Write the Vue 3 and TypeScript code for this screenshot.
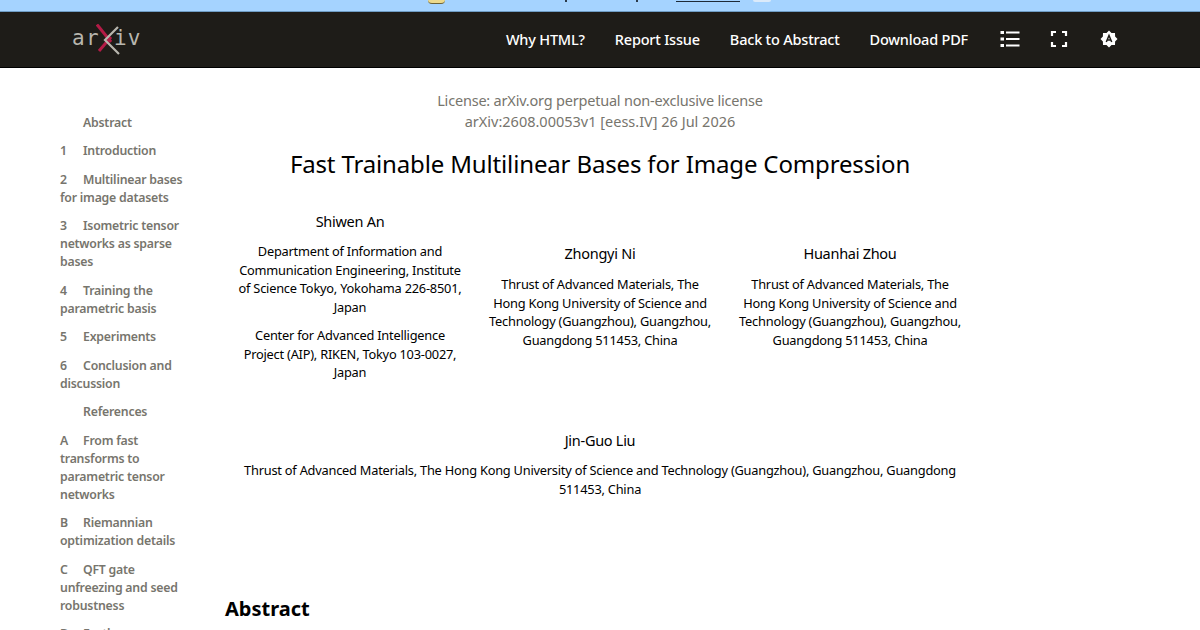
<script setup lang="ts">
type TocItem = { tag?: string; label: string }

const navLinks = ['Why HTML?', 'Report Issue', 'Back to Abstract', 'Download PDF']

const tocItems: TocItem[] = [
  { label: 'Abstract' },
  { tag: '1', label: 'Introduction' },
  { tag: '2', label: 'Multilinear bases for image datasets' },
  { tag: '3', label: 'Isometric tensor networks as sparse bases' },
  { tag: '4', label: 'Training the parametric basis' },
  { tag: '5', label: 'Experiments' },
  { tag: '6', label: 'Conclusion and discussion' },
  { label: 'References' },
  { tag: 'A', label: 'From fast transforms to parametric tensor networks' },
  { tag: 'B', label: 'Riemannian optimization details' },
  { tag: 'C', label: 'QFT gate unfreezing and seed robustness' },
  { tag: 'D', label: 'Further' }
]

const hkAffil = 'Thrust of Advanced Materials, The Hong Kong University of Science and Technology (Guangzhou), Guangzhou, Guangdong 511453, China'
</script>

<template>
  <div class="page">
    <div class="banner">
      <span class="banner-emoji"></span>
      <span class="banner-tick banner-tick--one"></span>
      <span class="banner-tick banner-tick--two"></span>
      <span class="banner-link"></span>
      <span class="banner-btn"></span>
    </div>
    <header class="navbar">
      <div class="logo">
        <span class="logo-text">ar</span>
        <svg class="logo-x" width="26" height="32" viewBox="0 0 26 32" fill="none">
          <path d="M1 0.5 L15 18" stroke="#b31b46" stroke-width="3" />
          <path d="M15 13 L3 27" stroke="#b31b46" stroke-width="3" />
          <path d="M22 3 L9 16 L23 30" stroke="#b8b6ae" stroke-width="2.2" />
        </svg>
        <span class="logo-text">iv</span>
      </div>
      <nav class="nav">
        <a v-for="link in navLinks" :key="link" class="nav-link">{{ link }}</a>
        <svg class="nav-icon list-icon" width="20" height="18" viewBox="0 0 20 18" fill="#fff">
          <rect x="0.5" y="1" width="3.5" height="3" />
          <rect x="0.5" y="7.5" width="3.5" height="3" />
          <rect x="0.5" y="14" width="3.5" height="3" />
          <rect x="6" y="1.5" width="13.5" height="2" />
          <rect x="6" y="8" width="13.5" height="2" />
          <rect x="6" y="14.5" width="13.5" height="2" />
        </svg>
        <svg class="nav-icon expand-icon" width="18" height="18" viewBox="0 0 18 18" fill="none" stroke="#fff" stroke-width="2.2">
          <path d="M2 6 V2 H6 M12 2 H16 V6 M16 12 V16 H12 M6 16 H2 V12" />
        </svg>
        <svg class="nav-icon theme-icon" width="18" height="18" viewBox="0 0 18 18">
          <path fill="#fff" d="M9 0.5 L11.5 2.9 L15 2.9 L15.1 6.4 L17.5 9 L15.1 11.6 L15 15.1 L11.5 15.1 L9 17.5 L6.5 15.1 L3 15.1 L2.9 11.6 L0.5 9 L2.9 6.4 L3 2.9 L6.5 2.9 Z" />
          <path fill="none" stroke="#1e1c18" stroke-width="1.5" d="M6.3 12 L9 5.4 L11.7 12 M7.2 10 H10.8" />
        </svg>
      </nav>
    </header>

    <div class="body">
      <aside class="toc">
        <div v-for="item in tocItems" :key="item.label" class="toc-item" :class="{ 'toc-item--plain': !item.tag }">
          <span v-if="item.tag" class="toc-tag">{{ item.tag }}</span>{{ item.label }}
        </div>
      </aside>

      <main class="article">
        <div class="license">
          <div class="license-line">License: arXiv.org perpetual non-exclusive license</div>
          <div>arXiv:2608.00053v1 [eess.IV] 26 Jul 2026</div>
        </div>
        <h1 class="title">Fast Trainable Multilinear Bases for Image Compression</h1>

        <div class="authors">
          <section class="author author--first">
            <div class="author-name">Shiwen An</div>
            <p>Department of Information and Communication Engineering, Institute of Science Tokyo, Yokohama 226-8501, Japan</p>
            <p>Center for Advanced Intelligence Project (AIP), RIKEN, Tokyo 103-0027, Japan</p>
          </section>
          <section class="author author--mid">
            <div class="author-name">Zhongyi Ni</div>
            <p>{{ hkAffil }}</p>
          </section>
          <section class="author author--mid">
            <div class="author-name">Huanhai Zhou</div>
            <p>{{ hkAffil }}</p>
          </section>
        </div>

        <section class="author author--wide">
          <div class="author-name">Jin-Guo Liu</div>
          <p>{{ hkAffil }}</p>
        </section>

        <h2 class="abstract-title">Abstract</h2>
      </main>
    </div>
  </div>
</template>

<style scoped>
.page {
  width: 1200px;
  height: 630px;
  overflow: hidden;
  background: #fff;
  font-family: "Noto Sans", "Liberation Sans", sans-serif;
  color: #000;
}

.banner {
  height: 11px;
  background: #a5d3ff;
  position: relative;
  border-bottom: 1px solid #6f9cc4;
}

.banner-emoji {
  position: absolute;
  left: 428px;
  top: 0;
  width: 17px;
  height: 3px;
  background: #ecd98c;
  border-radius: 0 0 8px 8px;
  border-bottom: 1px solid #6b6238;
}

.banner-tick {
  position: absolute;
  top: 0;
  width: 2px;
  height: 2px;
  background: #2b3a4a;
}

.banner-tick--one {
  left: 565px;
}

.banner-tick--two {
  left: 636px;
}

.banner-link {
  position: absolute;
  left: 676px;
  top: 0;
  width: 64px;
  height: 1px;
  border-bottom: 1px solid #1d2a38;
}

.banner-btn {
  position: absolute;
  left: 753px;
  top: 0;
  width: 18px;
  height: 2px;
  background: #dbeafa;
  border-radius: 0 0 3px 3px;
}

.navbar {
  height: 55px;
  background: #1e1c18;
  border-bottom: 1px solid #000;
  display: flex;
  align-items: center;
  justify-content: space-between;
}

.logo {
  display: flex;
  align-items: center;
  margin-left: 72px;
  height: 100%;
}

.logo-text {
  font-family: "DejaVu Sans Mono", monospace;
  font-size: 21px;
  line-height: 1;
  letter-spacing: 1.3px;
  color: #b8b6ae;
  margin-bottom: 3px;
}

.logo-x {
  margin: 0 -8px 0 -4px;
}

.nav {
  display: flex;
  align-items: center;
  margin-right: 82px;
  padding-bottom: 2px;
}

.nav-link {
  color: #fff;
  font-size: 14.5px;
  font-weight: 500;
  letter-spacing: -0.2px;
  margin-right: 30px;
}

.nav-icon {
  display: block;
}

.list-icon {
  margin: 0 30px 0 2px;
}

.expand-icon {
  margin-right: 32px;
}

.body {
  display: flex;
}

.toc {
  width: 126px;
  margin-left: 60px;
  padding-top: 45.5px;
  flex: none;
}

.toc-item {
  font-size: 12.3px;
  font-weight: 600;
  line-height: 18px;
  letter-spacing: -0.22px;
  color: #77756d;
  margin-bottom: 10.5px;
}

.toc-item--plain {
  padding-left: 23px;
}

.toc-tag {
  display: inline-block;
  width: 23px;
}

.article {
  width: 750px;
  margin-left: 39px;
  padding-top: 22px;
  flex: none;
}

.license {
  text-align: center;
  font-size: 14.5px;
  line-height: 20.5px;
  color: #77756d;
}

.license-line {
  letter-spacing: -0.2px;
}

.title {
  margin: 17px 0 0;
  text-align: center;
  font-size: 24px;
  line-height: 32px;
  font-weight: 400;
  letter-spacing: -0.15px;
}

.authors {
  display: flex;
  margin-top: 31px;
  align-items: flex-start;
}

.author {
  text-align: center;
  font-size: 12.8px;
  line-height: 18.7px;
  letter-spacing: -0.22px;
}

.author p {
  margin: 0 0 9px;
}

.author-name {
  font-size: 14.5px;
  line-height: 20px;
  letter-spacing: -0.28px;
  margin-bottom: 11px;
}

.author--first {
  width: 250px;
  flex: none;
}

.author--first p {
  padding: 0 10px;
}

.author--mid {
  width: 250px;
  flex: none;
  padding: 32px 13px 0;
  box-sizing: border-box;
}

.author--mid .author-name {
  margin-bottom: 12px;
}

.author--wide {
  margin-top: 39px;
}

.abstract-title {
  margin: 98px 0 0;
  font-size: 20px;
  line-height: 26px;
  font-weight: 700;
}
</style>

<style>
html,
body {
  margin: 0;
  background: #fff;
}
</style>
